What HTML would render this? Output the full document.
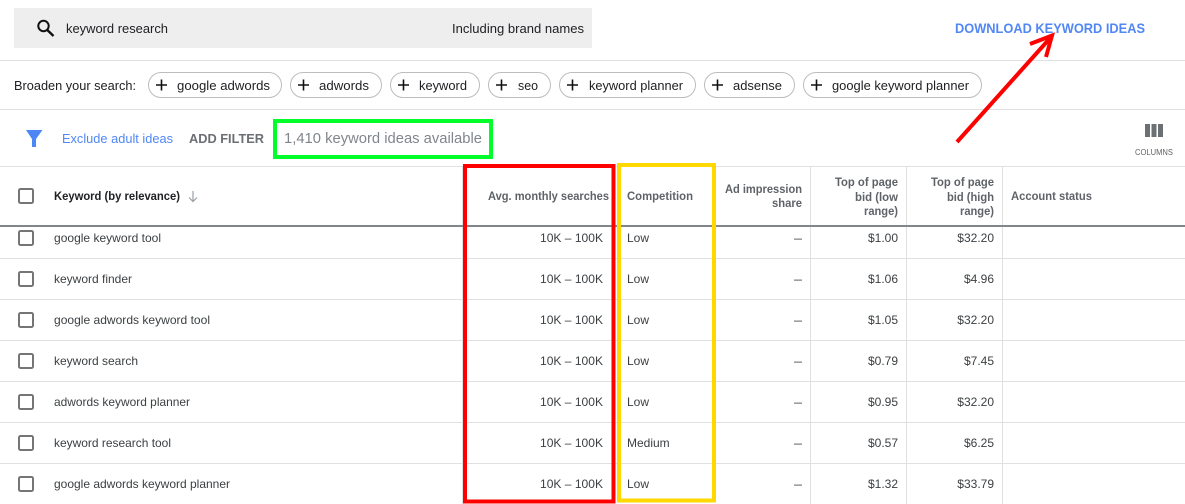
<!DOCTYPE html>
<html>
<head>
<meta charset="utf-8">
<style>
html,body{margin:0;padding:0;background:#fff;width:1185px;height:504px;overflow:hidden}
svg{display:block}
text{font-family:"Liberation Sans",sans-serif;font-size:12px;fill:#3c4043}
.b{font-weight:bold}
.h{font-weight:bold;fill:#5f6368}
.k{fill:#202124}
.cb{fill:none;stroke:#757575;stroke-width:2}
.ln{stroke:#e0e0e0;stroke-width:1}
</style>
</head>
<body>
<svg width="1185" height="504" viewBox="0 0 1185 504" xmlns="http://www.w3.org/2000/svg">
<rect x="14" y="8" width="578" height="40" fill="#eeeeee"/>
<circle cx="43.5" cy="26" r="5.2" fill="none" stroke="#111" stroke-width="2"/>
<path d="M47.3 30 L53.5 36" stroke="#111" stroke-width="2.4" fill="none"/>
<text x="66" y="33" textLength="102" lengthAdjust="spacingAndGlyphs" class="k" style="font-size:13px">keyword research</text>
<text x="452" y="33" textLength="132" lengthAdjust="spacingAndGlyphs" class="k" style="font-size:13px">Including brand names</text>
<text x="955" y="33" textLength="190" lengthAdjust="spacingAndGlyphs" class="b" style="font-size:14px;fill:#5087f5">DOWNLOAD KEYWORD IDEAS</text>

<line class="ln" x1="0" x2="1185" y1="60.5" y2="60.5"/>
<line class="ln" x1="0" x2="1185" y1="109.5" y2="109.5"/>
<line class="ln" x1="0" x2="1185" y1="166.5" y2="166.5"/>

<text x="14" y="90" textLength="122" lengthAdjust="spacingAndGlyphs" class="k" style="font-size:13px">Broaden your search:</text>
<g fill="#fff" stroke="#bdbdbd">
<rect x="148.5" y="72.5" width="133" height="25" rx="12.5"/>
<rect x="290.5" y="72.5" width="91" height="25" rx="12.5"/>
<rect x="390.5" y="72.5" width="89" height="25" rx="12.5"/>
<rect x="488.5" y="72.5" width="62" height="25" rx="12.5"/>
<rect x="559.5" y="72.5" width="136" height="25" rx="12.5"/>
<rect x="704.5" y="72.5" width="90" height="25" rx="12.5"/>
<rect x="803.5" y="72.5" width="178" height="25" rx="12.5"/>
</g>
<g stroke="#111" stroke-width="1.6" fill="none">
<path d="M156 85H167M161.500 79.500V90.500"/>
<path d="M298 85H309M303.500 79.500V90.500"/>
<path d="M398 85H409M403.500 79.500V90.500"/>
<path d="M496 85H507M501.500 79.500V90.500"/>
<path d="M567 85H578M572.500 79.500V90.500"/>
<path d="M712 85H723M717.500 79.500V90.500"/>
<path d="M811 85H822M816.500 79.500V90.500"/>
</g>
<text x="177" y="90" textLength="93" lengthAdjust="spacingAndGlyphs" class="k" style="font-size:13px">google adwords</text>
<text x="319" y="90" textLength="50" lengthAdjust="spacingAndGlyphs" class="k" style="font-size:13px">adwords</text>
<text x="419" y="90" textLength="48" lengthAdjust="spacingAndGlyphs" class="k" style="font-size:13px">keyword</text>
<text x="518" y="90" textLength="20" lengthAdjust="spacingAndGlyphs" class="k" style="font-size:13px">seo</text>
<text x="589" y="90" textLength="94" lengthAdjust="spacingAndGlyphs" class="k" style="font-size:13px">keyword planner</text>
<text x="733" y="90" textLength="49" lengthAdjust="spacingAndGlyphs" class="k" style="font-size:13px">adsense</text>
<text x="832" y="90" textLength="137" lengthAdjust="spacingAndGlyphs" class="k" style="font-size:13px">google keyword planner</text>

<path d="M26 130H42.500L36 139V147H32V139Z" fill="#4d86f5"/>
<text x="62" y="143" textLength="111" lengthAdjust="spacingAndGlyphs" style="font-size:13px;fill:#5087f5">Exclude adult ideas</text>
<text x="189" y="143" textLength="75" lengthAdjust="spacingAndGlyphs" class="b" style="font-size:13px;fill:#6b6f73">ADD FILTER</text>
<text x="284" y="143" textLength="198" lengthAdjust="spacingAndGlyphs" style="font-size:15px;fill:#80868b">1,410 keyword ideas available</text>
<rect x="275" y="121" width="216" height="36" fill="none" stroke="#00ff2a" stroke-width="4"/>

<g fill="#6b7075">
<rect x="1145" y="124" width="5" height="13"/>
<rect x="1151.500" y="124" width="5" height="13"/>
<rect x="1158" y="124" width="5" height="13"/>
</g>
<text x="1135" y="155" textLength="38" lengthAdjust="spacingAndGlyphs" style="font-size:8px;fill:#5f6368">COLUMNS</text>

<g class="ln">
<line x1="462.500" x2="462.500" y1="167" y2="504"/>
<line x1="810.500" x2="810.500" y1="167" y2="504"/>
<line x1="906.500" x2="906.500" y1="167" y2="504"/>
<line x1="1002.500" x2="1002.500" y1="167" y2="504"/>
<line x1="0" x2="1185" y1="258.500" y2="258.500"/>
<line x1="0" x2="1185" y1="299.500" y2="299.500"/>
<line x1="0" x2="1185" y1="340.500" y2="340.500"/>
<line x1="0" x2="1185" y1="381.500" y2="381.500"/>
<line x1="0" x2="1185" y1="422.500" y2="422.500"/>
<line x1="0" x2="1185" y1="463.500" y2="463.500"/>
</g>
<rect x="0" y="225" width="1185" height="2" fill="#80868b"/>

<rect class="cb" x="19" y="189" width="14" height="14" rx="1.500"/>
<text x="54" y="200" textLength="126" lengthAdjust="spacingAndGlyphs" class="b k">Keyword (by relevance)</text>
<path d="M193 191V201M189 197.500L193 201.500L197 197.500" fill="none" stroke="#9aa0a6" stroke-width="1.200"/>
<text x="488" y="200" textLength="121" lengthAdjust="spacingAndGlyphs" class="h">Avg. monthly searches</text>
<text x="627" y="200" textLength="66" lengthAdjust="spacingAndGlyphs" class="h">Competition</text>
<text x="725" y="193" textLength="77" lengthAdjust="spacingAndGlyphs" class="h">Ad impression</text>
<text x="772" y="207" textLength="30" lengthAdjust="spacingAndGlyphs" class="h">share</text>
<text x="835" y="186" textLength="63" lengthAdjust="spacingAndGlyphs" class="h">Top of page</text>
<text x="855" y="201" textLength="43" lengthAdjust="spacingAndGlyphs" class="h">bid (low</text>
<text x="864" y="215" textLength="34" lengthAdjust="spacingAndGlyphs" class="h">range)</text>
<text x="931" y="186" textLength="63" lengthAdjust="spacingAndGlyphs" class="h">Top of page</text>
<text x="947" y="201" textLength="47" lengthAdjust="spacingAndGlyphs" class="h">bid (high</text>
<text x="960" y="215" textLength="34" lengthAdjust="spacingAndGlyphs" class="h">range)</text>
<text x="1011" y="200" textLength="81" lengthAdjust="spacingAndGlyphs" class="h">Account status</text>

<!-- rows -->
<rect class="cb" x="19" y="231" width="14" height="14" rx="1.500"/>
<text x="54" y="242" textLength="107" lengthAdjust="spacingAndGlyphs">google keyword tool</text>
<text x="540" y="242" textLength="63" lengthAdjust="spacingAndGlyphs">10K – 100K</text>
<text x="627" y="242">Low</text>
<text x="794" y="242" textLength="8" lengthAdjust="spacingAndGlyphs">—</text>
<text x="898" y="242" text-anchor="end">$1.00</text>
<text x="994" y="242" text-anchor="end">$32.20</text>

<rect class="cb" x="19" y="272" width="14" height="14" rx="1.500"/>
<text x="54" y="283" textLength="78" lengthAdjust="spacingAndGlyphs">keyword finder</text>
<text x="540" y="283" textLength="63" lengthAdjust="spacingAndGlyphs">10K – 100K</text>
<text x="627" y="283">Low</text>
<text x="794" y="283" textLength="8" lengthAdjust="spacingAndGlyphs">—</text>
<text x="898" y="283" text-anchor="end">$1.06</text>
<text x="994" y="283" text-anchor="end">$4.96</text>

<rect class="cb" x="19" y="313" width="14" height="14" rx="1.500"/>
<text x="54" y="324" textLength="156" lengthAdjust="spacingAndGlyphs">google adwords keyword tool</text>
<text x="540" y="324" textLength="63" lengthAdjust="spacingAndGlyphs">10K – 100K</text>
<text x="627" y="324">Low</text>
<text x="794" y="324" textLength="8" lengthAdjust="spacingAndGlyphs">—</text>
<text x="898" y="324" text-anchor="end">$1.05</text>
<text x="994" y="324" text-anchor="end">$32.20</text>

<rect class="cb" x="19" y="354" width="14" height="14" rx="1.500"/>
<text x="54" y="365" textLength="84" lengthAdjust="spacingAndGlyphs">keyword search</text>
<text x="540" y="365" textLength="63" lengthAdjust="spacingAndGlyphs">10K – 100K</text>
<text x="627" y="365">Low</text>
<text x="794" y="365" textLength="8" lengthAdjust="spacingAndGlyphs">—</text>
<text x="898" y="365" text-anchor="end">$0.79</text>
<text x="994" y="365" text-anchor="end">$7.45</text>

<rect class="cb" x="19" y="395" width="14" height="14" rx="1.500"/>
<text x="54" y="406" textLength="136" lengthAdjust="spacingAndGlyphs">adwords keyword planner</text>
<text x="540" y="406" textLength="63" lengthAdjust="spacingAndGlyphs">10K – 100K</text>
<text x="627" y="406">Low</text>
<text x="794" y="406" textLength="8" lengthAdjust="spacingAndGlyphs">—</text>
<text x="898" y="406" text-anchor="end">$0.95</text>
<text x="994" y="406" text-anchor="end">$32.20</text>

<rect class="cb" x="19" y="436" width="14" height="14" rx="1.500"/>
<text x="54" y="447" textLength="117" lengthAdjust="spacingAndGlyphs">keyword research tool</text>
<text x="540" y="447" textLength="63" lengthAdjust="spacingAndGlyphs">10K – 100K</text>
<text x="627" y="447">Medium</text>
<text x="794" y="447" textLength="8" lengthAdjust="spacingAndGlyphs">—</text>
<text x="898" y="447" text-anchor="end">$0.57</text>
<text x="994" y="447" text-anchor="end">$6.25</text>

<rect class="cb" x="19" y="477" width="14" height="14" rx="1.500"/>
<text x="54" y="488" textLength="176" lengthAdjust="spacingAndGlyphs">google adwords keyword planner</text>
<text x="540" y="488" textLength="63" lengthAdjust="spacingAndGlyphs">10K – 100K</text>
<text x="627" y="488">Low</text>
<text x="794" y="488" textLength="8" lengthAdjust="spacingAndGlyphs">—</text>
<text x="898" y="488" text-anchor="end">$1.32</text>
<text x="994" y="488" text-anchor="end">$33.79</text>

<!-- annotations -->
<rect x="465" y="166" width="148.500" height="335.500" fill="none" stroke="#ff0000" stroke-width="4"/>
<rect x="619" y="165" width="95" height="335.500" fill="none" stroke="#ffd800" stroke-width="4"/>
<path d="M957 142L1052 36M1030 44L1052 35.500L1046 57" fill="none" stroke="#ff0000" stroke-width="4"/>
</svg>
</body>
</html>
